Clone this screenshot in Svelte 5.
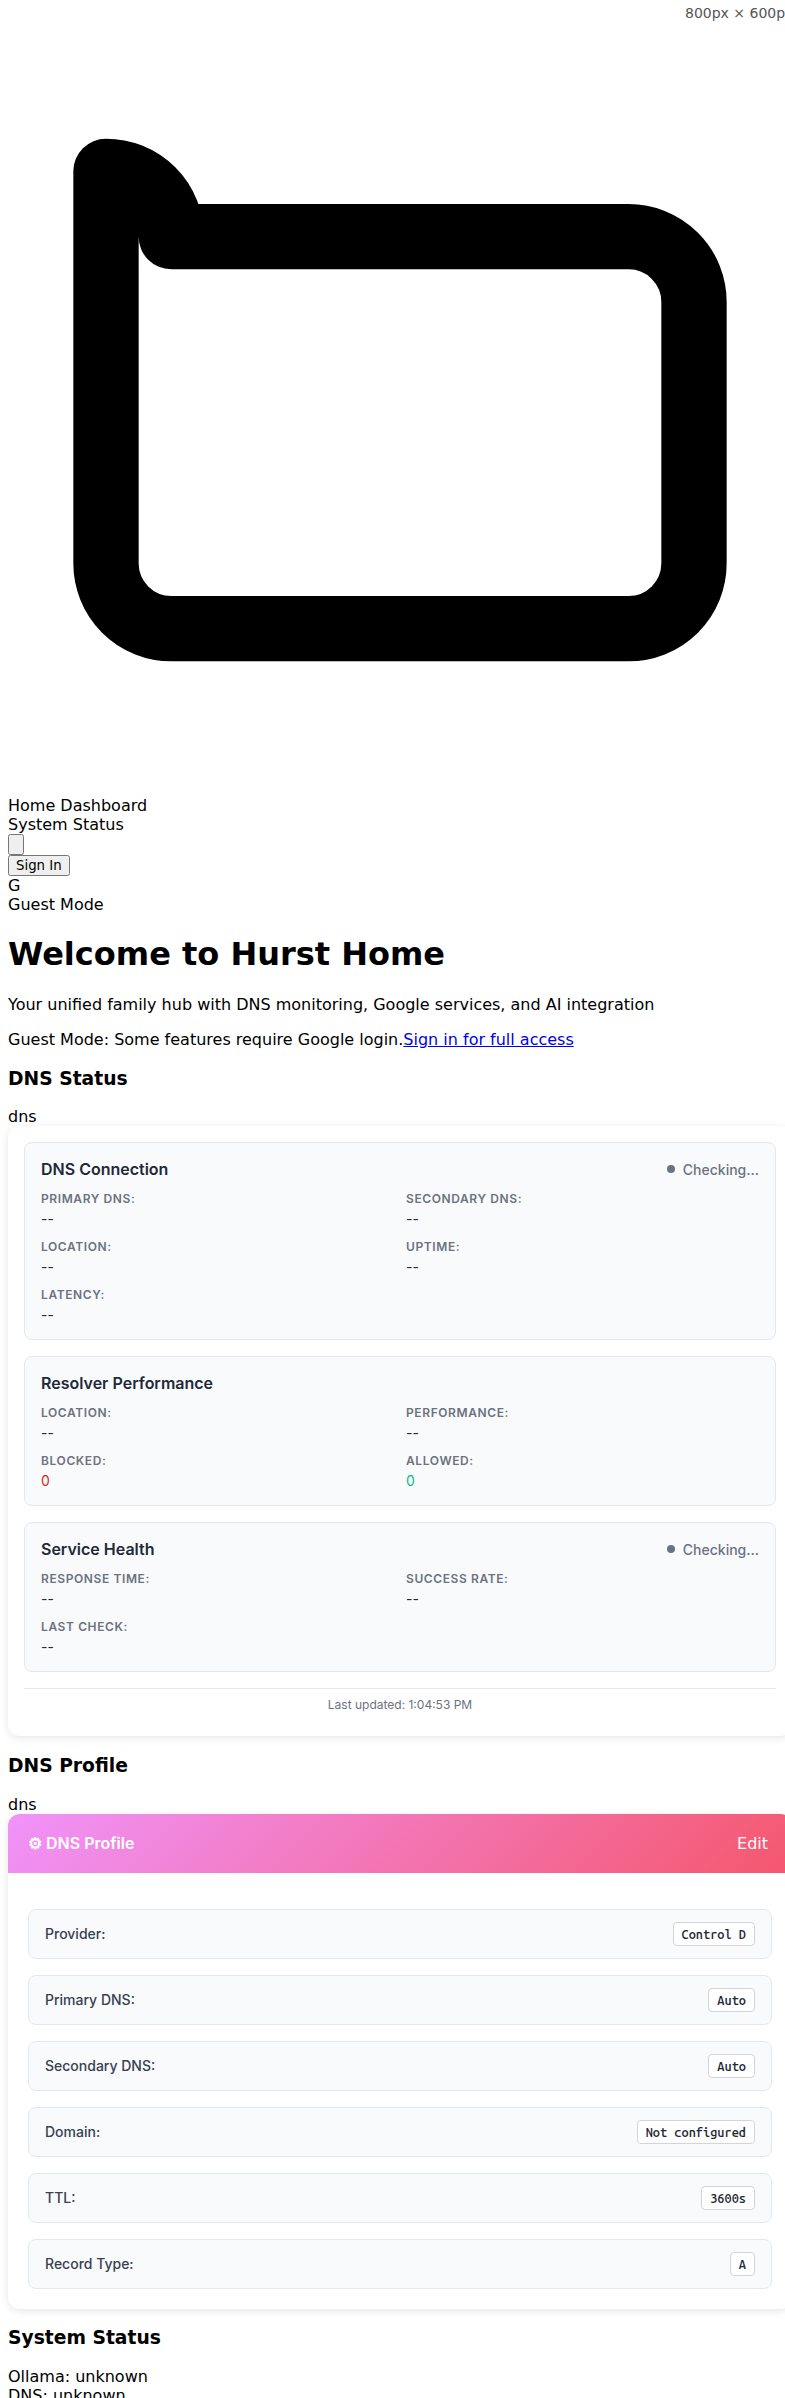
<script>
  const panels = [
    {
      title: 'DNS Connection',
      status: 'Checking...',
      items: [
        ['Primary DNS:', '--'],
        ['Secondary DNS:', '--'],
        ['Location:', '--'],
        ['Uptime:', '--'],
        ['Latency:', '--']
      ]
    },
    {
      title: 'Resolver Performance',
      items: [
        ['Location:', '--'],
        ['Performance:', '--'],
        ['Blocked:', '0', 'blocked'],
        ['Allowed:', '0', 'allowed']
      ]
    },
    {
      title: 'Service Health',
      status: 'Checking...',
      items: [
        ['Response Time:', '--'],
        ['Success Rate:', '--'],
        ['Last Check:', '--']
      ]
    }
  ];

  const profile = [
    ['Provider:', 'Control D'],
    ['Primary DNS:', 'Auto'],
    ['Secondary DNS:', 'Auto'],
    ['Domain:', 'Not configured'],
    ['TTL:', '3600s'],
    ['Record Type:', 'A']
  ];
</script>

<div class="viewport">
  <div class="size-label">800px × 600px</div>
  <div class="page">
    <header>
      <div>
        <svg fill="none" stroke="currentColor" viewBox="0 0 24 24">
          <path
            stroke-linecap="round"
            stroke-linejoin="round"
            stroke-width="2"
            d="M3 7v10a2 2 0 002 2h14a2 2 0 002-2V9a2 2 0 00-2-2H5a2 2 0 00-2-2z"
          />
        </svg>
      </div>
      <div>Home Dashboard</div>
      <div>System Status</div>
      <div class="action"><button aria-label="Menu"></button></div>
      <div class="action"><button>Sign In</button></div>
      <div>G</div>
      <div>Guest Mode</div>
    </header>

    <main>
      <h1>Welcome to Hurst Home</h1>
      <p>Your unified family hub with DNS monitoring, Google services, and AI integration</p>
      <div>Guest Mode: Some features require Google login.<a href="#signin">Sign in for full access</a></div>

      <h3>DNS Status</h3>
      <div>dns</div>
      <section class="card status-card">
        {#each panels as panel}
          <div class="panel">
            <div class="panel-head">
              <span class="panel-title">{panel.title}</span>
              {#if panel.status}
                <span class="status"><i class="dot"></i>{panel.status}</span>
              {/if}
            </div>
            <div class="grid">
              {#each panel.items as [label, value, tone]}
                <div class="item">
                  <span class="label">{label}</span>
                  <span class="value {tone ?? ''}">{value}</span>
                </div>
              {/each}
            </div>
          </div>
        {/each}
        <div class="updated">Last updated: 1:04:53 PM</div>
      </section>

      <h3>DNS Profile</h3>
      <div>dns</div>
      <section class="card profile-card">
        <div class="profile-head">
          <span class="profile-title">⚙ DNS Profile</span>
          <span class="edit">Edit</span>
        </div>
        <div class="rows">
          {#each profile as [label, value]}
            <div class="row">
              <span class="row-label">{label}</span>
              <span class="badge">{value}</span>
            </div>
          {/each}
        </div>
      </section>

      <h3>System Status</h3>
      <div>Ollama: unknown</div>
      <div>DNS: unknown</div>
    </main>
  </div>
</div>

<style>
  .viewport {
    position: relative;
    height: 2398px;
    overflow: hidden;
    background: #fff;
    color: #000;
    font-family: 'DejaVu Sans', sans-serif;
    font-size: 16px;
  }
  .size-label {
    position: absolute;
    top: 5px;
    left: 685px;
    white-space: nowrap;
    font-size: 14px;
    line-height: 17px;
    color: #555;
  }
  .page {
    width: 784px;
    padding: 8px;
  }
  svg {
    width: 100%;
  }
  .action {
    display: flex;
    height: 21px;
  }
  button {
    font-family: 'DejaVu Sans', sans-serif;
    font-size: 13.333px;
    height: 21px;
  }
  .card {
    border-radius: 12px;
    background: #fff;
    box-shadow: 0 2px 8px rgba(0, 0, 0, 0.1);
    font-family: Inter, sans-serif;
  }
  .status-card {
    padding: 16px 16px 24px;
    display: flex;
    flex-direction: column;
    gap: 16px;
  }
  .panel {
    padding: 16px;
    border: 1px solid #e5e7eb;
    border-radius: 8px;
    background: #f9fafc;
  }
  .panel-head {
    display: flex;
    justify-content: space-between;
    align-items: center;
    height: 20px;
    margin-bottom: 12px;
  }
  .panel-title {
    font-weight: 600;
    line-height: 20px;
    color: #1f2937;
  }
  .status {
    display: flex;
    align-items: center;
    gap: 8px;
    font-size: 14px;
    font-weight: 500;
    line-height: 17px;
    color: #6b7280;
  }
  .dot {
    width: 8px;
    height: 8px;
    border-radius: 50%;
    background: #6b7280;
  }
  .grid {
    display: grid;
    grid-template-columns: 1fr 1fr;
    gap: 12px;
  }
  .item {
    display: flex;
    flex-direction: column;
    gap: 4px;
  }
  .label {
    font-size: 12px;
    font-weight: 600;
    line-height: 15px;
    letter-spacing: 0.05em;
    text-transform: uppercase;
    color: #6b7280;
  }
  .value {
    font-size: 14px;
    font-weight: 400;
    line-height: 17px;
    color: #1f2937;
  }
  .blocked {
    color: #dc2626;
  }
  .allowed {
    color: #10b981;
  }
  .updated {
    padding-top: 8px;
    border-top: 1px solid #e5e7eb;
    font-size: 12px;
    line-height: 15px;
    text-align: center;
    color: #6b7280;
  }
  .profile-card {
    overflow: hidden;
  }
  .profile-head {
    display: flex;
    justify-content: space-between;
    align-items: center;
    height: 59px;
    padding: 0 24px 0 20px;
    background: linear-gradient(135deg, #f093fb 0%, #f5576c 100%);
    color: #fff;
  }
  .profile-title {
    font-weight: 600;
  }
  .edit {
    font-family: 'DejaVu Sans', sans-serif;
  }
  .rows {
    display: flex;
    flex-direction: column;
    gap: 16px;
    padding: 36px 20px 20px;
  }
  .row {
    display: flex;
    justify-content: space-between;
    align-items: center;
    padding: 12px 16px;
    border: 1px solid #e2e8f0;
    border-radius: 8px;
    background: #f8fafc;
  }
  .row-label {
    font-size: 14px;
    font-weight: 500;
    line-height: 17px;
    color: #374151;
  }
  .badge {
    padding: 4px 8px;
    border: 1px solid #d1d5db;
    border-radius: 4px;
    background: #fff;
    font-family: 'Ubuntu Mono', 'DejaVu Sans Mono', monospace;
    font-size: 12.8px;
    font-weight: 500;
    line-height: 14px;
    color: #1f2937;
  }
</style>
